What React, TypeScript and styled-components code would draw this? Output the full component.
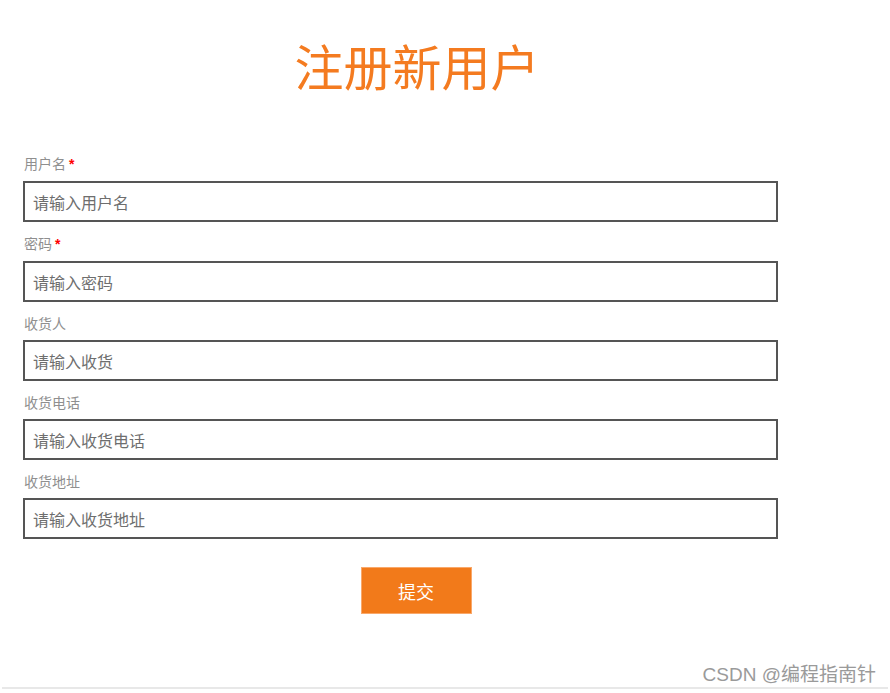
import React from "react";
import styled, { createGlobalStyle } from "styled-components";

const GlobalStyle = createGlobalStyle`
  html, body {
    margin: 0;
    padding: 0;
    background: #fff;
    font-family: "Noto Sans CJK SC", "Liberation Sans", sans-serif;
  }
`;

const Page = styled.div`
  width: 890px;
  height: 693px;
  display: flex;
  flex-direction: column;
  overflow: hidden;
`;

const Main = styled.div`
  width: 830px;
  display: flex;
  flex-direction: column;
`;

const Title = styled.h1`
  margin: 39px 0 0;
  padding-left: 4px;
  font-size: 49px;
  line-height: 52px;
  font-weight: 400;
  color: #f47b20;
  text-align: center;
`;

const Form = styled.form`
  margin-top: 62px;
  padding-left: 23px;
  display: flex;
  flex-direction: column;
`;

const Field = styled.div`
  display: flex;
  flex-direction: column;
  margin-bottom: 11px;
`;

const Label = styled.label`
  font-size: 14px;
  line-height: 20px;
  color: #8f8f8f;
  padding-left: 1px;
  margin-bottom: 7px;
`;

const Star = styled.span`
  color: #f00;
  margin-left: 3px;
  font-family: "Liberation Sans", sans-serif;
  font-weight: 700;
`;

const Input = styled.input`
  box-sizing: border-box;
  width: 755px;
  height: 41px;
  border: 2px solid #555;
  border-radius: 0;
  padding: 0 8px;
  font-family: "Noto Sans CJK SC", sans-serif;
  font-size: 16px;
  color: #333;
  outline: none;
  &::placeholder {
    color: #6e6e6e;
  }
`;

const ButtonRow = styled.div`
  display: flex;
  justify-content: center;
  padding-right: 21px;
  margin-top: 17px;
`;

const Submit = styled.button`
  width: 111px;
  height: 47px;
  border: 1px solid #f9a86a;
  background: #f27a1a;
  color: #fff;
  font-family: "Noto Sans CJK SC", sans-serif;
  font-size: 18px;
  cursor: pointer;
`;

const Footer = styled.div`
  margin-top: auto;
  display: flex;
  justify-content: flex-end;
  padding-right: 14px;
`;

const Watermark = styled.span`
  font-family: "Liberation Sans", "Noto Sans CJK SC", sans-serif;
  font-size: 19px;
  line-height: 24px;
  color: #9a9a9a;
`;

const BottomLine = styled.div`
  height: 2px;
  margin: 0 2px 4px;
  background: #e8e8e8;
`;

const fields = [
  { label: "用户名", placeholder: "请输入用户名", required: true, type: "text" },
  { label: "密码", placeholder: "请输入密码", required: true, type: "password" },
  { label: "收货人", placeholder: "请输入收货", required: false, type: "text" },
  { label: "收货电话", placeholder: "请输入收货电话", required: false, type: "text" },
  { label: "收货地址", placeholder: "请输入收货地址", required: false, type: "text" },
];

export default function App() {
  return (
    <>
      <GlobalStyle />
      <Page>
        <Main>
          <Title>注册新用户</Title>
          <Form onSubmit={(e) => e.preventDefault()}>
            {fields.map((f) => (
              <Field key={f.label}>
                <Label>
                  {f.label}
                  {f.required && <Star>*</Star>}
                </Label>
                <Input type={f.type} placeholder={f.placeholder} />
              </Field>
            ))}
            <ButtonRow>
              <Submit type="submit">提交</Submit>
            </ButtonRow>
          </Form>
        </Main>
        <Footer>
          <Watermark>CSDN @编程指南针</Watermark>
        </Footer>
        <BottomLine />
      </Page>
    </>
  );
}
